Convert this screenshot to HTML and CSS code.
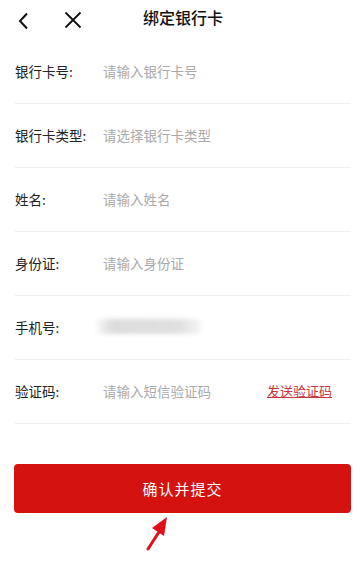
FILE: index.html
```html
<!DOCTYPE html>
<html lang="zh-CN">
<head>
<meta charset="utf-8">
<link rel="stylesheet" href="styles.css">
</head>
<body>
<div class="page">
  <header class="nav">
    <span class="nav-icon back">
      <svg width="12" height="18" viewBox="0 0 12 18"><path d="M10 1.5 L3 9 L10 16.5" fill="none" stroke="#111" stroke-width="2"/></svg>
    </span>
    <span class="nav-icon close">
      <svg width="18" height="18" viewBox="0 0 18 18"><path d="M1.5 1.5 L16.5 16.5 M16.5 1.5 L1.5 16.5" fill="none" stroke="#111" stroke-width="1.8"/></svg>
    </span>
    <h1 class="title">绑定银行卡</h1>
  </header>

  <div class="form">
    <div class="row"><span class="label">银行卡号:</span><span class="ph">请输入银行卡号</span></div>
    <div class="row"><span class="label">银行卡类型:</span><span class="ph">请选择银行卡类型</span></div>
    <div class="row"><span class="label">姓名:</span><span class="ph">请输入姓名</span></div>
    <div class="row"><span class="label">身份证:</span><span class="ph">请输入身份证</span></div>
    <div class="row"><span class="label">手机号:</span><span class="blur"></span></div>
    <div class="row"><span class="label">验证码:</span><span class="ph grow">请输入短信验证码</span><span class="send">发送验证码</span></div>
  </div>

  <div class="actions">
    <button class="submit">确认并提交</button>
    <svg class="pointer" width="30" height="40" viewBox="0 0 30 40">
      <path d="M4 38 L15 21" stroke="#e0101a" stroke-width="3" stroke-linecap="round"/>
      <polygon points="23,6 8,17 20,25" fill="#e0101a"/>
    </svg>
  </div>
</div>
</body>
</html>
```

FILE: styles.css
```css
* { box-sizing: border-box; }
html, body { margin: 0; padding: 0; background: #fff; }
body {
  font-family: "Noto Sans CJK SC", "Noto Sans", sans-serif;
  color: #333;
  width: 360px;
  height: 578px;
  overflow: hidden;
}
.page { position: relative; }
.nav {
  height: 40px;
  display: flex;
  align-items: center;
  position: relative;
}
.nav-icon { display: flex; align-items: center; }
.back { margin-left: 17px; margin-top: 1px; }
.close { margin-left: 35px; }
.title {
  position: absolute;
  left: 0; right: 0; top: 0;
  margin: 0;
  text-align: center;
  line-height: 34px;
  font-size: 16px;
  font-weight: 500;
  color: #111;
  padding-left: 6px;
}
.form { padding: 0 9px 0 15px; }
.row {
  height: 64px;
  display: flex;
  align-items: center;
  border-bottom: 1px solid #eeeeee;
  font-size: 13.5px;
  padding-bottom: 2px;
}
.label { width: 88px; flex: none; color: #222; }
.ph { color: #aaa; }
.grow { flex: 1; }
.blur {
  width: 104px;
  height: 15px;
  margin-left: -6px;
  background: linear-gradient(90deg, #f6f6f6, #dcdcdc 15%, #e0e0e0 80%, #f6f6f6);
  filter: blur(2px);
}
.send {
  color: #c8363e;
  text-decoration: underline;
  font-size: 13px;
  margin-right: 19px;
}
.actions {
  position: relative;
  padding: 40px 9px 0 14px;
}
.submit {
  display: block;
  width: 337px;
  height: 49px;
  border: none;
  border-radius: 4px;
  background: #d4120f;
  color: #fff;
  font-family: inherit;
  font-size: 15px;
  letter-spacing: 1px;
  padding: 0;
  margin: 0;
}
.pointer {
  position: absolute;
  left: 144px;
  top: 87px;
}
```
